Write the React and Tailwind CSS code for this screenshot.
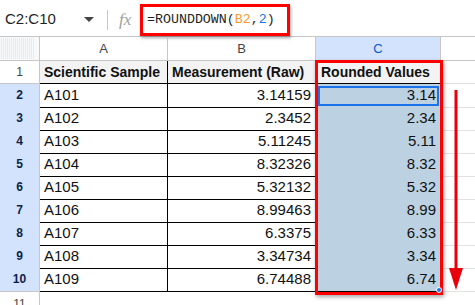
import React from 'react';

const rows = [
  ['A101', '3.14159', '3.14'],
  ['A102', '2.3452', '2.34'],
  ['A103', '5.11245', '5.11'],
  ['A104', '8.32326', '8.32'],
  ['A105', '5.32132', '5.32'],
  ['A106', '8.99463', '8.99'],
  ['A107', '6.3375', '6.33'],
  ['A108', '3.34734', '3.34'],
  ['A109', '6.74488', '6.74'],
];

const cols = 'grid grid-cols-[40px_128px_148px_125px_1fr]';

function FormulaBar() {
  return (
    <div className="flex h-[37px] items-center border-b border-[#c7c7c7] bg-white pt-[3px]">
      <div className="w-[80px] pl-[5px] text-[15px] text-[#1f1f1f]">C2:C10</div>
      <svg width="10" height="6" viewBox="0 0 10 6" className="ml-[4px]">
        <path d="M0 0 L10 0 L5 5 Z" fill="#444" />
      </svg>
      <div className="ml-[13px] h-[20px] w-px bg-[#c7c7c7]" />
      <div className="ml-[11px] w-[18px] font-['Liberation_Serif'] text-[17px] italic text-[#a0a0a0]">fx</div>
      <div className="ml-[3px] flex h-[32px] w-[150px] items-center border-[3px] border-[#ff0000] pl-[4px] font-['Liberation_Mono'] text-[13.3px] text-[#1f1f1f] shadow-[1px_2px_3px_rgba(0,0,0,0.35)]">
        =ROUNDDOWN(<span className="text-[#f29a39]">B2</span>,<span className="text-[#1a73e8]">2</span>)
      </div>
    </div>
  );
}

function App() {
  return (
    <div className="relative h-[305px] w-[475px] overflow-hidden whitespace-nowrap bg-white font-['Liberation_Sans',Arial,sans-serif]">
      <div className="h-[3px] bg-[#f3f5f9]" />
      <div className="-mt-[3px]">
        <FormulaBar />
      </div>

      <div className={`${cols} h-[24px] text-[13px] text-[#444]`}>
        <div className="border-b border-r border-[#c7c7c7] bg-[#f8f9fa] p-[1px]">
          <div className="h-full w-[34px] bg-[repeating-linear-gradient(90deg,#e8eaed_0px,#e8eaed_1px,#f8f9fa_1px,#f8f9fa_2px)]" />
        </div>
        <div className="flex items-center justify-center border-b border-r border-[#c7c7c7]">A</div>
        <div className="flex items-center justify-center border-b border-r border-[#c7c7c7]">B</div>
        <div className="flex items-center justify-center border-b border-r border-[#c7c7c7] bg-[#d3e3fd] text-[#0b57d0]">C</div>
        <div className="border-b border-[#c7c7c7]" />
      </div>

      <div className={`${cols} h-[23px] text-[14px] text-[#111]`}>
        <div className="flex items-center justify-center border-b border-r border-[#c7c7c7] text-[12px] text-[#444]">1</div>
        <div className="flex items-center overflow-hidden border-b border-r border-black bg-[#f3f3f3] pl-[4px] font-bold">Scientific Sample</div>
        <div className="flex items-center overflow-hidden border-b border-r border-black bg-[#f3f3f3] pl-[4px] font-bold">Measurement (Raw)</div>
        <div className="flex items-center overflow-hidden border-b border-r border-black bg-[#f3f3f3] pl-[5px] font-bold">Rounded Values</div>
        <div className="border-b border-[#e1e1e1]" />
      </div>

      {rows.map((r, i) => (
        <div key={r[0]} className={`${cols} h-[23px] text-[15px] text-[#111]`}>
          <div className="flex items-center justify-center border-b border-r border-[#c7c7c7] bg-[#d3e3fd] text-[12px] font-bold text-[#0b1f4a]">{i + 2}</div>
          <div className="flex items-center border-b border-r border-black pl-[4px]">{r[0]}</div>
          <div className="flex items-center justify-end border-b border-r border-black pr-[4px]">{r[1]}</div>
          <div className={`flex items-center justify-end border-b border-r border-black bg-[#bcd2e3] pr-[4px] ${i === 0 ? 'outline-2 -outline-offset-4 outline-[#1a73e8]' : ''}`}>{r[2]}</div>
          <div className="border-b border-[#e1e1e1]" />
        </div>
      ))}

      <div className={`${cols} h-[23px]`}>
        <div className="flex items-start justify-center border-r border-[#c7c7c7] pt-[4px] text-[12px] text-[#444]">11</div>
      </div>

      {/* highlight box over column C */}
      <div className="pointer-events-none absolute left-[315px] top-[60px] h-[235px] w-[128px] border-[3px] border-[#ff0000] shadow-[1px_2px_4px_rgba(0,0,0,0.35)]" />
      <div className="pointer-events-none absolute left-[436px] top-[287px] h-[6px] w-[6px] rounded-full border border-white bg-[#1a73e8]" />

      {/* arrow */}
      <svg className="absolute left-[446px] top-[90px]" width="20" height="210" viewBox="0 0 20 210">
        <line x1="10" y1="0" x2="10" y2="180" stroke="#e8000b" strokeWidth="3" />
        <path d="M3 178 L17 178 L10 200 Z" fill="#e8000b" />
      </svg>
    </div>
  );
}

export default App;
